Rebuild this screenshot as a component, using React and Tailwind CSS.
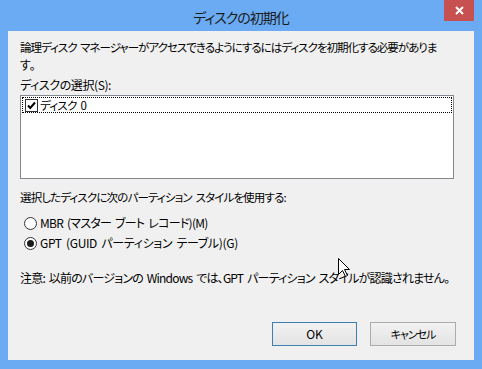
import React from "react";

const jp = "font-['Meiryo_UI','Noto_Sans_CJK_JP',sans-serif] [font-feature-settings:'palt'] [word-spacing:2px]";

function Checkbox() {
  return (
    <div className="w-[13px] h-[13px] border border-[#333333] bg-white flex items-center justify-center">
      <svg width="11" height="11" viewBox="0 0 11 11">
        <path d="M2 5.5 L4.3 8 L9 2.5" fill="none" stroke="#000" strokeWidth="2" />
      </svg>
    </div>
  );
}

function Radio({ checked }) {
  return (
    <div className="w-[13px] h-[13px] rounded-full border border-[#333333] bg-white flex items-center justify-center">
      {checked && <div className="w-[7px] h-[7px] rounded-full bg-[#1a1a1a]" />}
    </div>
  );
}

export default function App() {
  return (
    <div className={`w-[482px] h-[369px] bg-[#6aabf3] flex flex-col ${jp} text-[#000] overflow-hidden relative`}>
      <div className="h-[31px] flex items-center justify-center relative shrink-0">
        <span className="text-[14px] leading-none text-[#1b1b1b] mt-[2px] tracking-[-1px]">ディスクの初期化</span>
        <div className="absolute right-[8px] top-0 w-[30px] h-[21px] bg-[#c75050] flex items-center justify-center">
          <svg width="9" height="9" viewBox="0 0 9 9">
            <path d="M1 1 L8 8 M8 1 L1 8" stroke="#fff" strokeWidth="2" />
          </svg>
        </div>
      </div>
      <div className="mx-[8px] h-[329px] bg-[#f0f0f0] flex flex-col px-[12px] pt-[7px] text-[12px] leading-[18px]">
        <div className="whitespace-nowrap text-[11.5px] tracking-[-0.98px]">論理ディスク マネージャーがアクセスできるようにするにはディスクを初期化する必要がありま</div>
        <div className="whitespace-nowrap">す。</div>
        <div className="whitespace-nowrap mt-[2px] tracking-[-0.4px]">ディスクの選択(S):</div>
        <div className="mt-[1px] w-[434px] h-[84px] border border-[#828790] bg-white p-[1px]">
          <div className="h-[16px] border border-dotted border-black flex items-center gap-[2px] pl-[2px]">
            <Checkbox />
            <span className="whitespace-nowrap text-[11.5px] tracking-[-0.7px]">ディスク 0</span>
          </div>
        </div>
        <div className="whitespace-nowrap mt-[9px] text-[11.5px] tracking-[-0.85px]">選択したディスクに次のパーティション スタイルを使用する:</div>
        <div className="mt-[8px] flex flex-col gap-[2px] pl-[4px]">
          <div className="flex items-center gap-[3px]">
            <Radio />
            <span className="whitespace-nowrap tracking-[-0.75px]">MBR (マスター ブート レコード)(M)</span>
          </div>
          <div className="flex items-center gap-[3px]">
            <Radio checked />
            <span className="whitespace-nowrap tracking-[-0.35px]">GPT (GUID パーティション テーブル)(G)</span>
          </div>
        </div>
        <div className="whitespace-nowrap mt-[17px] tracking-[-0.8px]">注意: 以前のバージョンの Windows では、GPT パーティション スタイルが認識されません。</div>
        <div className="mt-auto mb-[14px] flex justify-end gap-[13px] pr-[6px]">
          <button className="w-[85px] h-[24px] border border-[#3c7fb1] bg-gradient-to-b from-[#f2f2f2] to-[#e3e3e3] text-[12px] flex items-center justify-center">OK</button>
          <button className="w-[86px] h-[24px] border border-[#acacac] bg-gradient-to-b from-[#f2f2f2] to-[#e3e3e3] text-[11px] tracking-[-1px] flex items-center justify-center">キャンセル</button>
        </div>
      </div>
      <svg className="absolute left-[338px] top-[258px]" width="13" height="20" viewBox="0 0 13 20">
        <path d="M0.5 0.5 L0.5 16.5 L4.5 12.5 L7.5 18.5 L9.5 17.5 L6.5 11.5 L11.5 11.5 Z" fill="#fff" stroke="#000" strokeWidth="1" />
      </svg>
    </div>
  );
}
